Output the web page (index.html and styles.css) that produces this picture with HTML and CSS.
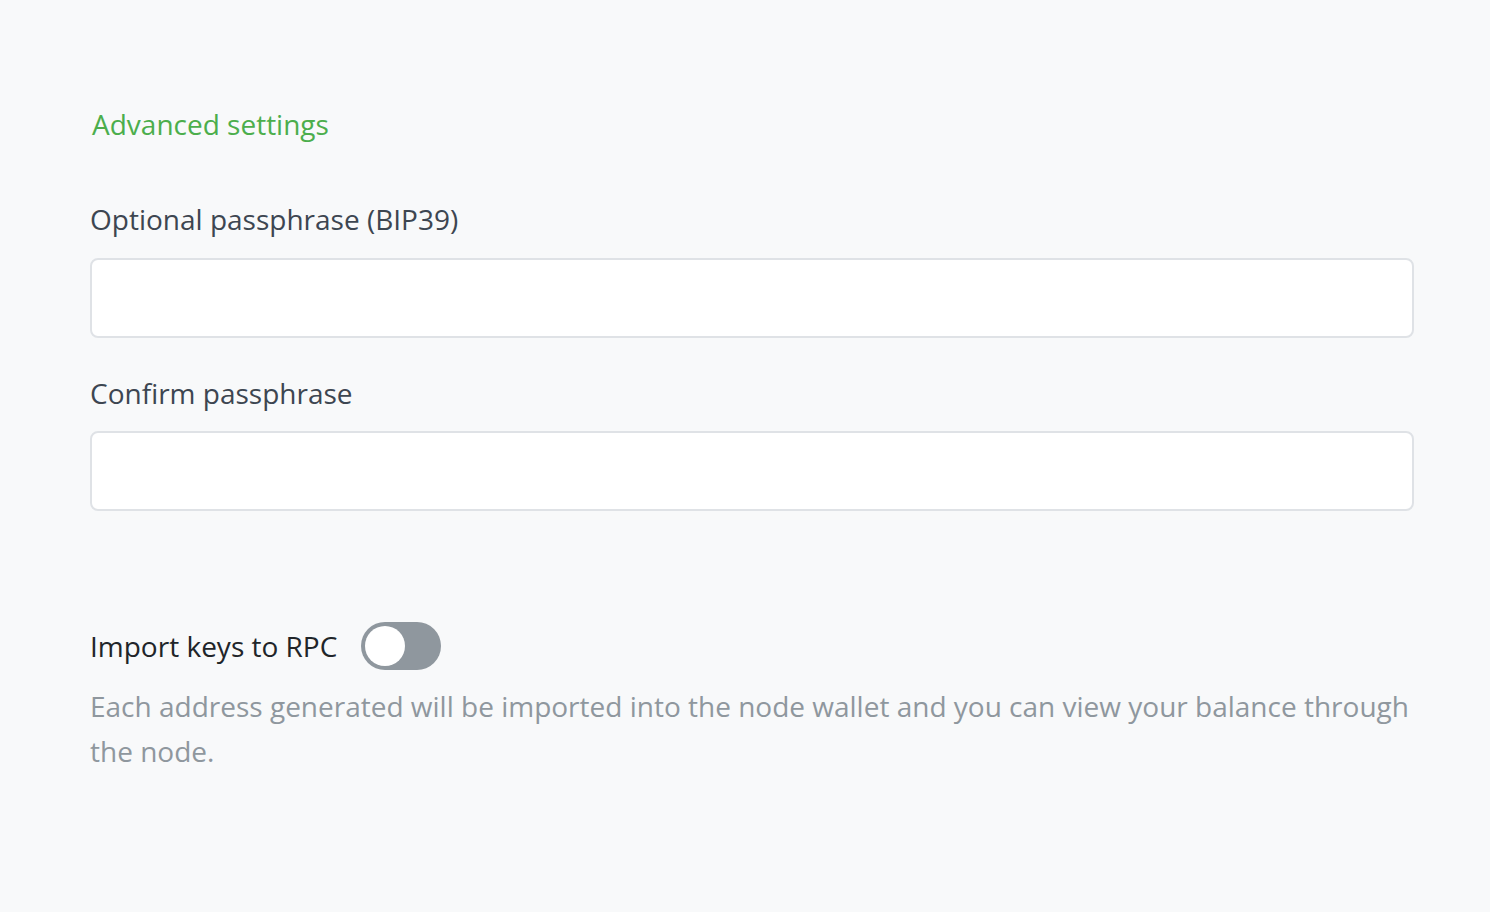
FILE: index.html
```html
<!DOCTYPE html>
<html>
<head>
<meta charset="utf-8">
<link rel="stylesheet" href="styles.css">
</head>
<body>
<div class="page">
  <a class="adv-link">Advanced settings</a>
  <div class="field">
    <label class="label">Optional passphrase (BIP39)</label>
    <div class="input"></div>
  </div>
  <div class="field">
    <label class="label">Confirm passphrase</label>
    <div class="input"></div>
  </div>
  <div class="toggle-row">
    <span class="toggle-label">Import keys to RPC</span>
    <span class="switch"><span class="knob"></span></span>
  </div>
  <p class="help">Each address generated will be imported into the node wallet and you can view your balance through the node.</p>
</div>
</body>
</html>
```
FILE: styles.css
```css
html, body {
  margin: 0;
  padding: 0;
  background: #f8f9fa;
  font-family: "Open Sans", "Liberation Sans", sans-serif;
}
.page {
  padding: 102px 76px 0 90px;
  display: flex;
  flex-direction: column;
}
.adv-link {
  color: #4cae4c;
  font-size: 28px;
  line-height: 44px;
  margin-left: 2px;
}
.field {
  display: flex;
  flex-direction: column;
}
.field:first-of-type { margin-top: 51px; }
.label {
  color: #3d4651;
  font-size: 28px;
  line-height: 44px;
  margin-bottom: 17px;
}
.field + .field .label { margin-top: 33px; margin-bottom: 16px; }
.input {
  height: 76px;
  background: #fff;
  border: 2px solid #dfe2e6;
  border-radius: 8px;
}
.toggle-row {
  display: flex;
  align-items: center;
  margin-top: 111px;
  gap: 24px;
}
.toggle-label {
  color: #212529;
  font-size: 28px;
  line-height: 44px;
}
.switch {
  width: 80px;
  height: 48px;
  border-radius: 24px;
  background: #8f979e;
  display: flex;
  align-items: center;
  padding: 0 4px;
  box-sizing: border-box;
}
.knob {
  width: 40px;
  height: 40px;
  border-radius: 50%;
  background: #fff;
}
.help {
  margin: 14px 0 0;
  color: #8f979e;
  font-size: 28px;
  line-height: 45px;
}
```
